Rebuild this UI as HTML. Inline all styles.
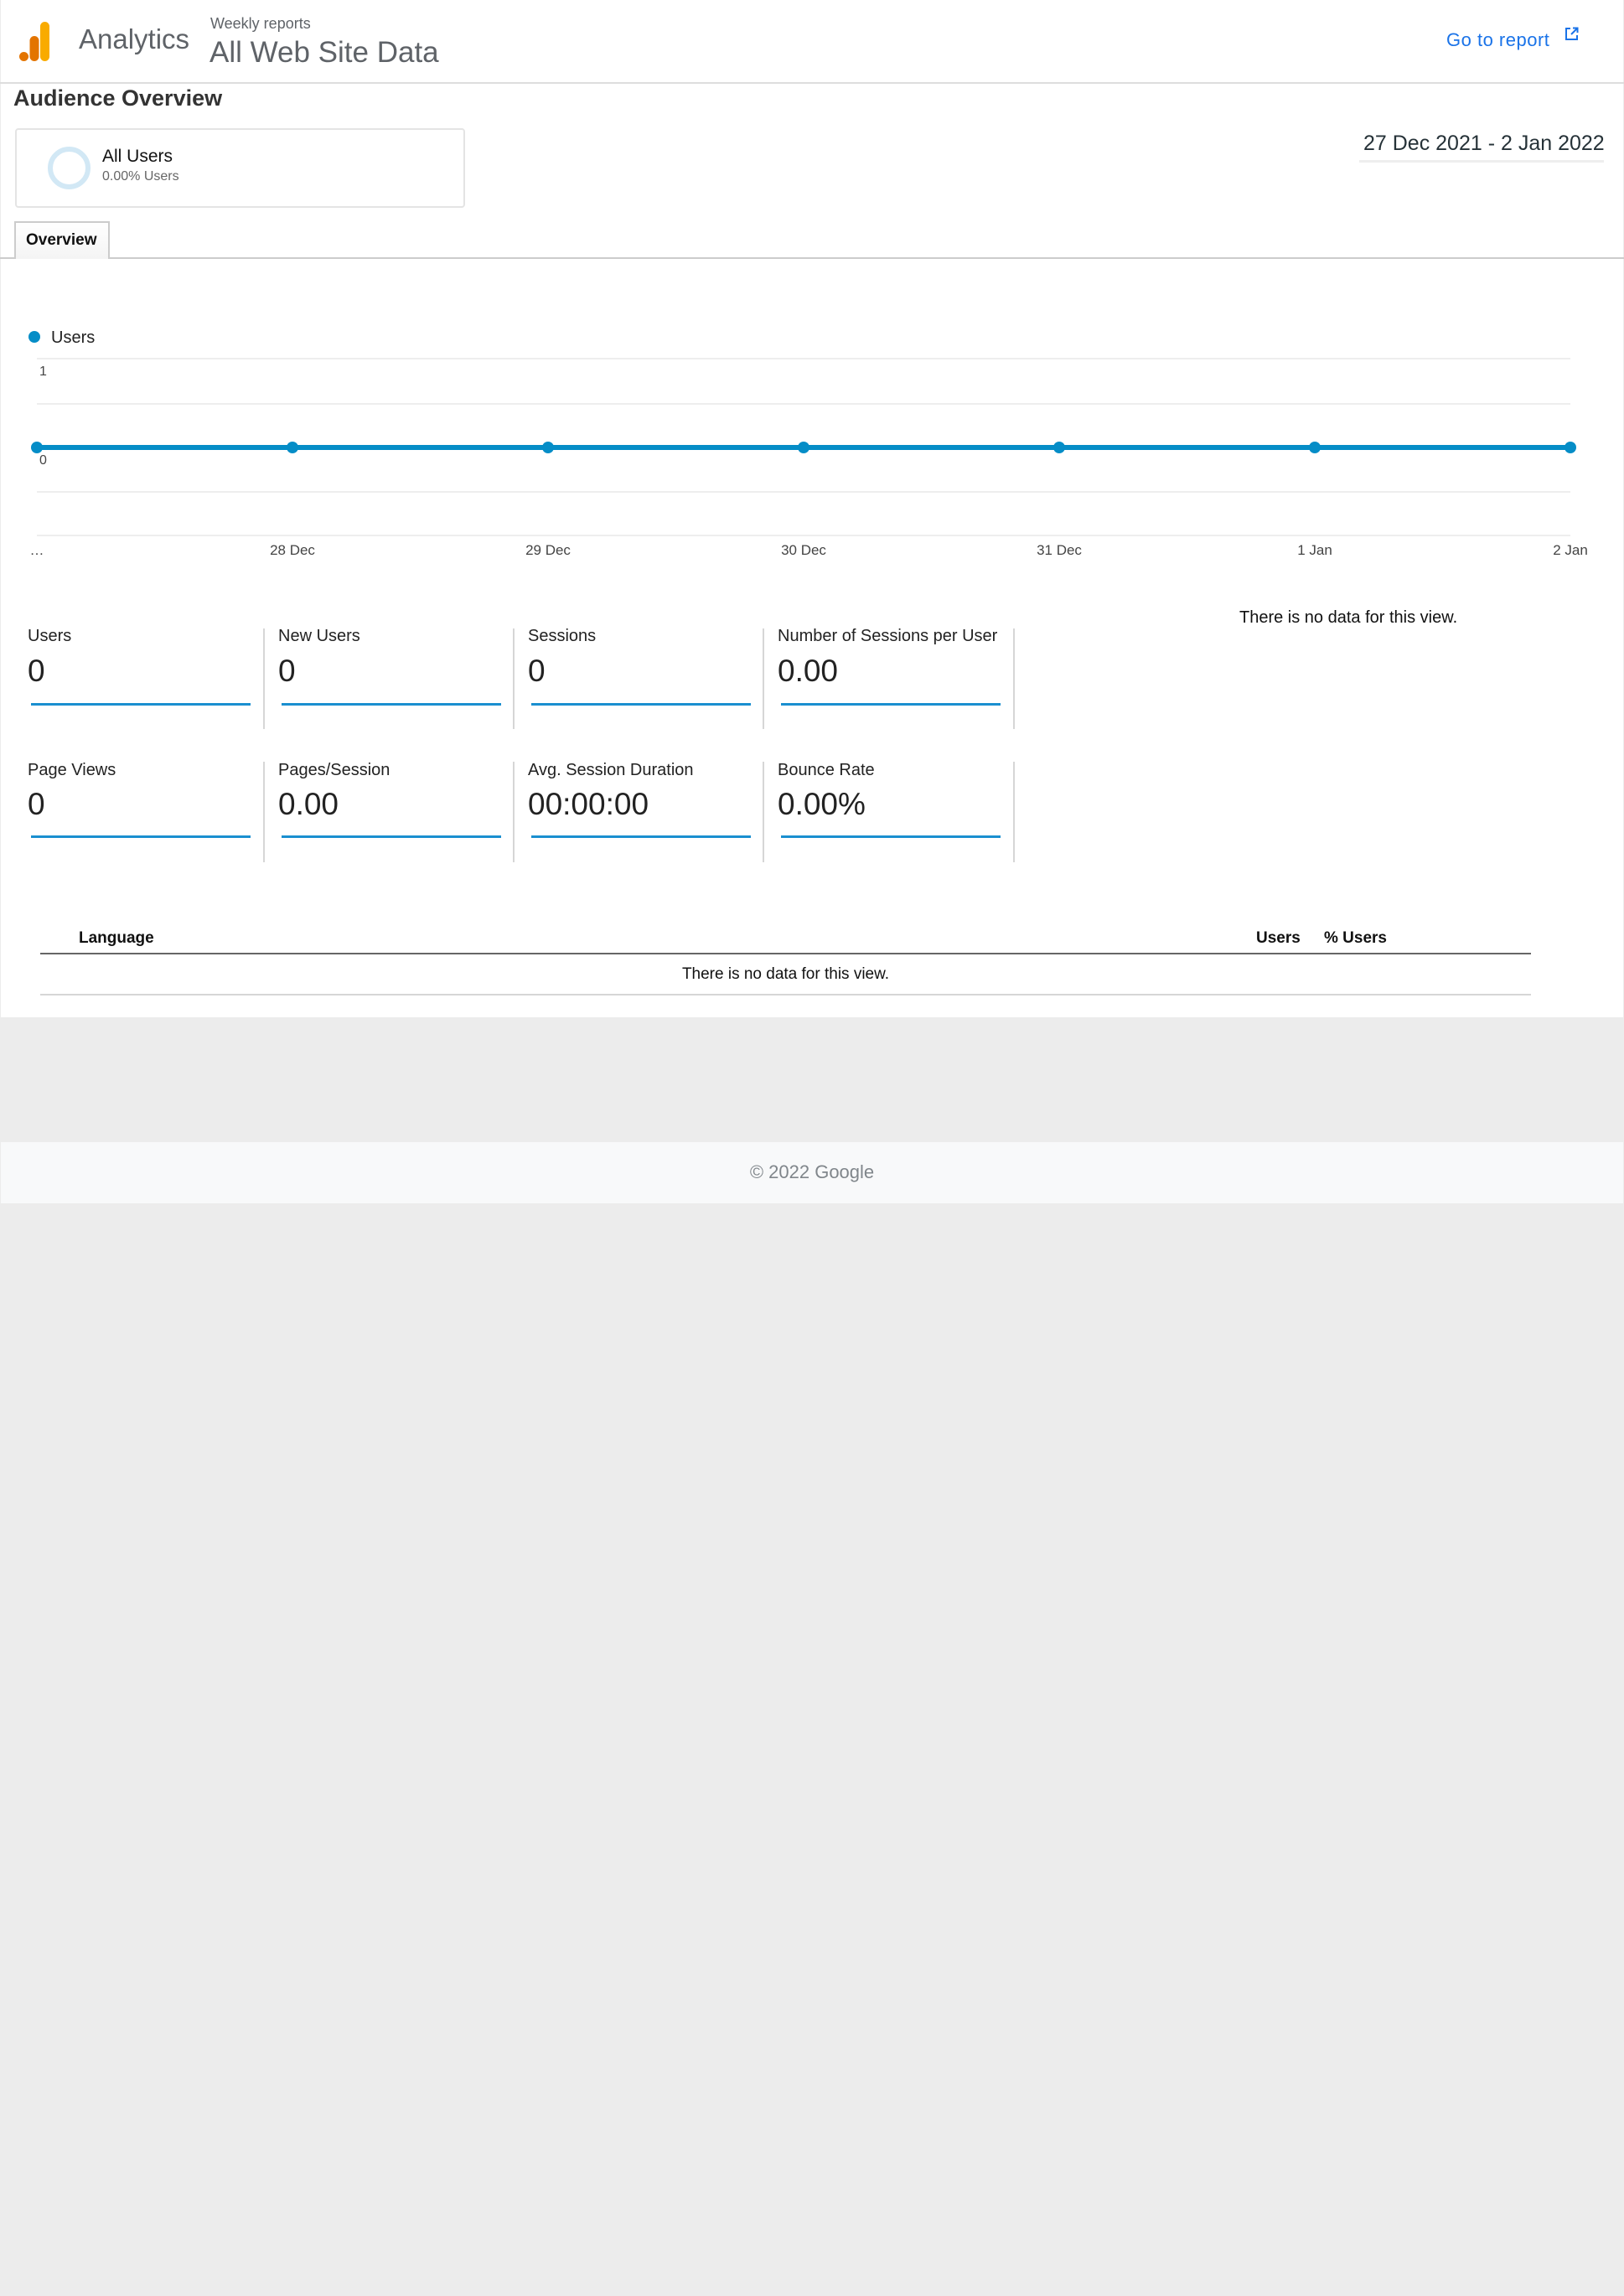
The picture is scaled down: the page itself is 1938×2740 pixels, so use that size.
<!DOCTYPE html>
<html><head><meta charset="utf-8"><style>
*{margin:0;padding:0;box-sizing:border-box}
body{width:1938px;height:2740px;background:#ececec;font-family:"Liberation Sans",Arial,sans-serif;position:relative;overflow:hidden;color:#222}
.a{position:absolute;white-space:nowrap}
.lbl{font-size:20px;color:#222}
.val{font-size:37px;color:#222}
.bl{position:absolute;height:3px;background:#1a8fd0;width:262px}
.dv{position:absolute;width:2px;background:#d6d6d6;height:120px}
</style></head><body>
<div class="a" style="left:1px;top:0;width:1936px;height:1214px;background:#fff"></div>
<div class="a" style="left:0;top:98px;width:1938px;height:2px;background:#ddd"></div>
<svg class="a" style="left:22px;top:26px" width="44" height="48" viewBox="0 0 44 48">
<rect x="26" y="0" width="11" height="47" rx="5.5" fill="#f9ab00"/>
<rect x="13.5" y="17" width="11" height="30" rx="5.5" fill="#e37400"/>
<circle cx="6.5" cy="41.5" r="5.5" fill="#e37400"/></svg>
<div class="a" style="left:94px;top:28px;font-size:33px;color:#5f6368">Analytics</div>
<div class="a" style="left:251px;top:18px;font-size:18px;color:#5f6368">Weekly reports</div>
<div class="a" style="left:250px;top:43px;font-size:35px;color:#5f6368">All Web Site Data</div>
<div class="a" style="left:1726px;top:35px;font-size:22px;color:#1a73e8;letter-spacing:0.5px">Go to report</div>
<svg class="a" style="left:1867px;top:32px" width="17" height="17" viewBox="0 0 17 17" fill="none" stroke="#1a73e8" stroke-width="2"><path d="M7 2H2v13h13v-5M10 1.5h5.5V7M15.5 1.5L8 9"/></svg>
<div class="a" style="left:16px;top:102px;font-size:27px;font-weight:bold;color:#333">Audience Overview</div>
<div class="a" style="left:18px;top:153px;width:537px;height:95px;border:2px solid #e4e4e4;border-radius:4px"></div>
<div class="a" style="left:57px;top:175px;width:51px;height:51px;border:6px solid #d2e8f5;border-radius:50%"></div>
<div class="a" style="left:122px;top:175px;font-size:21px;color:#111">All Users</div>
<div class="a" style="left:122px;top:202px;font-size:16px;color:#666">0.00% Users</div>
<div class="a" style="left:1627px;top:157px;font-size:25px;color:#263238">27 Dec 2021 - 2 Jan 2022</div>
<div class="a" style="left:1622px;top:191px;width:292px;height:3px;background:#eee"></div>
<div class="a" style="left:0;top:307px;width:1938px;height:2px;background:#ccc"></div>
<div class="a" style="left:17px;top:264px;width:114px;height:45px;border:2px solid #ccc;border-bottom:none;background:linear-gradient(#fff,#f4f4f4)"></div>
<div class="a" style="left:31px;top:276px;font-size:19px;font-weight:bold;color:#111">Overview</div>
<svg class="a" style="left:0;top:380px" width="1938" height="300">
<circle cx="41" cy="22" r="7" fill="#058dc7"/>
<text x="61" y="29" font-size="20" fill="#222" font-family="Liberation Sans">Users</text>
<g stroke="#eee" stroke-width="2"><line x1="44" y1="48" x2="1874" y2="48"/><line x1="44" y1="102" x2="1874" y2="102"/><line x1="44" y1="207" x2="1874" y2="207"/><line x1="44" y1="259" x2="1874" y2="259"/></g>
<text x="47" y="68" font-size="16" fill="#444" font-family="Liberation Sans">1</text>
<text x="47" y="174" font-size="16" fill="#444" font-family="Liberation Sans">0</text>
<line x1="44" y1="154" x2="1874" y2="154" stroke="#058dc7" stroke-width="6"/>
<g fill="#058dc7"><circle cx="44" cy="154" r="7"/><circle cx="349" cy="154" r="7"/><circle cx="654" cy="154" r="7"/><circle cx="959" cy="154" r="7"/><circle cx="1264" cy="154" r="7"/><circle cx="1569" cy="154" r="7"/><circle cx="1874" cy="154" r="7"/></g>
<g font-size="17" fill="#444" font-family="Liberation Sans" text-anchor="middle">
<text x="44" y="282">…</text><text x="349" y="282">28 Dec</text><text x="654" y="282">29 Dec</text><text x="959" y="282">30 Dec</text><text x="1264" y="282">31 Dec</text><text x="1569" y="282">1 Jan</text><text x="1874" y="282">2 Jan</text></g>
</svg>
<!-- metrics row 1 -->
<div class="a lbl" style="left:33px;top:748px">Users</div><div class="a val" style="left:33px;top:780px">0</div><div class="bl" style="left:37px;top:839px"></div>
<div class="dv" style="left:314px;top:750px"></div>
<div class="a lbl" style="left:332px;top:748px">New Users</div><div class="a val" style="left:332px;top:780px">0</div><div class="bl" style="left:336px;top:839px"></div>
<div class="dv" style="left:612px;top:750px"></div>
<div class="a lbl" style="left:630px;top:748px">Sessions</div><div class="a val" style="left:630px;top:780px">0</div><div class="bl" style="left:634px;top:839px"></div>
<div class="dv" style="left:910px;top:750px"></div>
<div class="a lbl" style="left:928px;top:748px">Number of Sessions per User</div><div class="a val" style="left:928px;top:780px">0.00</div><div class="bl" style="left:932px;top:839px"></div>
<div class="dv" style="left:1209px;top:750px"></div>
<!-- row 2 -->
<div class="a lbl" style="left:33px;top:908px">Page Views</div><div class="a val" style="left:33px;top:939px">0</div><div class="bl" style="left:37px;top:997px"></div>
<div class="dv" style="left:314px;top:909px"></div>
<div class="a lbl" style="left:332px;top:908px">Pages/Session</div><div class="a val" style="left:332px;top:939px">0.00</div><div class="bl" style="left:336px;top:997px"></div>
<div class="dv" style="left:612px;top:909px"></div>
<div class="a lbl" style="left:630px;top:908px">Avg. Session Duration</div><div class="a val" style="left:630px;top:939px">00:00:00</div><div class="bl" style="left:634px;top:997px"></div>
<div class="dv" style="left:910px;top:909px"></div>
<div class="a lbl" style="left:928px;top:908px">Bounce Rate</div><div class="a val" style="left:928px;top:939px">0.00%</div><div class="bl" style="left:932px;top:997px"></div>
<div class="dv" style="left:1209px;top:909px"></div>
<div class="a" style="left:1479px;top:726px;font-size:20px;color:#111">There is no data for this view.</div>
<!-- table -->
<div class="a" style="left:94px;top:1109px;font-size:19px;font-weight:bold;color:#111">Language</div>
<div class="a" style="left:1499px;top:1109px;font-size:19px;font-weight:bold;color:#111">Users</div>
<div class="a" style="left:1580px;top:1109px;font-size:19px;font-weight:bold;color:#111">% Users</div>
<div class="a" style="left:48px;top:1137px;width:1779px;height:2px;background:#666"></div>
<div class="a" style="left:48px;top:1152px;width:1779px;text-align:center;font-size:19px;color:#111">There is no data for this view.</div>
<div class="a" style="left:48px;top:1186px;width:1779px;height:2px;background:#d6d6d6"></div>
<!-- footer -->
<div class="a" style="left:1px;top:1363px;width:1936px;height:73px;background:#f8f9fa"></div>
<div class="a" style="left:0;top:1386px;width:1938px;text-align:center;font-size:22px;color:#80868b">© 2022 Google</div>
</body></html>
